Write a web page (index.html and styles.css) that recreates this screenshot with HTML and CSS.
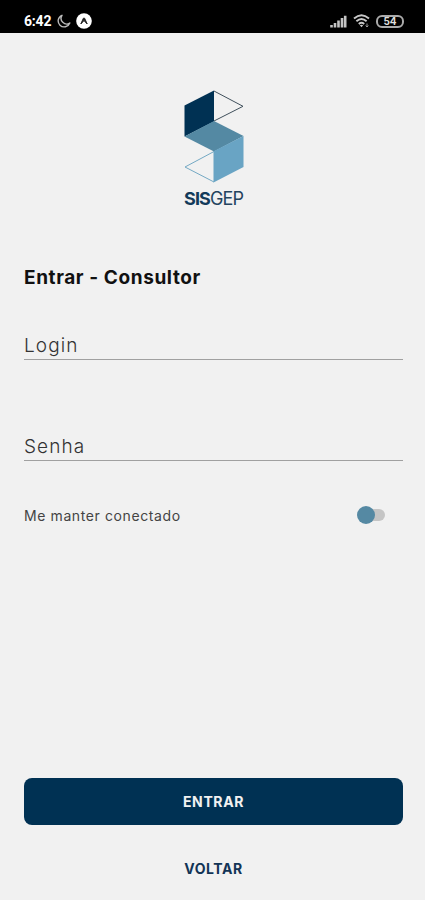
FILE: index.html
```html
<!DOCTYPE html>
<html lang="pt-BR">
<head>
    <meta charset="UTF-8">
    <meta name="viewport" content="width=device-width, initial-scale=1.0">
    <title>SISGEP - Entrar</title>
    <link rel="stylesheet" href="styles.css">
</head>
<body>
    <header class="status-bar">
        <span class="time">6:42</span>
        <svg class="moon" width="14" height="14" viewBox="0 0 14 14">
            <path d="M5 1.3A6 6 0 1 0 12.8 9A5.6 5.6 0 0 1 5 1.3Z" fill="none" stroke="#bbb" stroke-width="1.4" stroke-linejoin="round"/>
        </svg>
        <svg class="app-icon" width="16" height="16" viewBox="0 0 16 16">
            <circle cx="8" cy="8" r="7.8" fill="#fff"/>
            <path d="M4.8 11L7.4 5.2H8.6L11.2 11L8 7.6Z" fill="#222" stroke="#222" stroke-width="1" stroke-linejoin="round"/>
        </svg>
        <svg class="signal" width="17" height="13" viewBox="0 0 17 13">
            <path d="M1.5 12.5V10M5 12.5V8M8.5 12.5V5.5M12 12.5V3M15.2 12.5V.8" fill="none" stroke="#c4c4c4" stroke-width="2.6"/>
        </svg>
        <svg class="wifi" width="17" height="14" viewBox="0 0 17 14">
            <path d="M1 4.5Q8.5 -2 16 4.5M3.4 7.3Q8.5 2.8 13.6 7.3M5.8 10Q8.5 7.6 11.2 10" fill="none" stroke="#c8c8c8" stroke-width="1.9"/>
            <path d="M6.8 11.3L8.5 13.3L10.2 11.3Q8.5 10 6.8 11.3Z" fill="#c8c8c8"/>
            <path d="M14 9.5V13M12.6 11.6L14 13L15.4 11.6" fill="none" stroke="#999" stroke-width="1"/>
        </svg>
        <span class="battery">54</span>
    </header>

    <main class="screen">
        <div class="logo">
            <svg width="61" height="94" viewBox="0 0 61 94">
                <path d="M31 1L60 16.3L31 31" fill="none" stroke="#40505c" stroke-width="1"/>
                <path d="M31 61.5L2 77L31 92" fill="none" stroke="#74a9c4" stroke-width="1"/>
                <path d="M31 .5V31.5L1.5 46.5V15.5Z" fill="#003153"/>
                <path d="M31 31L60.5 46L31 61.5L1.5 46.5Z" fill="#5489a3"/>
                <path d="M60.5 46V77L30.5 92.5V61.3Z" fill="#69a4c4"/>
            </svg>
            <div class="brand"><b>SIS</b>GEP</div>
        </div>

        <h1 class="title">Entrar - Consultor</h1>

        <div class="field">Login</div>
        <div class="field">Senha</div>

        <div class="keep-row">
            <span class="keep-label">Me manter conectado</span>
            <span class="switch"><span class="thumb"></span></span>
        </div>

        <div class="actions">
            <button class="btn-enter">ENTRAR</button>
            <button class="btn-back">VOLTAR</button>
        </div>
    </main>
</body>
</html>
```

FILE: styles.css
```css
* {
    box-sizing: border-box;
}

body {
    margin: 0;
    height: 900px;
    display: flex;
    flex-direction: column;
    overflow: hidden;
    background-color: #f1f1f1;
    font-family: Inter, "Open Sans", sans-serif;
}

.status-bar {
    display: flex;
    align-items: center;
    height: 33px;
    padding: 9px 21px 0 24px;
    background-color: #000;
    color: #fff;
}

.time {
    width: 27px;
    font-family: Roboto, sans-serif;
    font-size: 14px;
    font-weight: 700;
    line-height: 16px;
    letter-spacing: -0.2px;
}

.moon {
    margin-left: 6px;
}

.app-icon {
    margin-left: 5px;
}

.signal {
    margin-left: auto;
}

.wifi {
    margin-left: 6px;
}

.battery {
    width: 28px;
    height: 13px;
    margin-left: 6px;
    border: 2px solid #aaa;
    border-radius: 6px;
    font-size: 10px;
    font-weight: 700;
    line-height: 9px;
    text-align: center;
    color: #ddd;
}

.screen {
    flex: 1;
    display: flex;
    flex-direction: column;
    padding: 57px 22px 19px 24px;
}

.logo {
    display: flex;
    flex-direction: column;
    align-items: center;
}

.brand {
    height: 20px;
    margin-top: 5px;
    font-size: 18px;
    line-height: 20px;
    letter-spacing: -0.9px;
    white-space: nowrap;
    color: #24445f;
}

.brand b {
    font-weight: 700;
    color: #123a5a;
}

.title {
    margin: 55px 0 0;
    font-size: 19px;
    font-weight: 700;
    line-height: 27px;
    letter-spacing: 0.6px;
    color: #111;
}

.field {
    height: 31px;
    margin-top: 38px;
    border-bottom: 1px solid #a0a0a0;
    font-size: 19px;
    font-weight: 300;
    line-height: 34px;
    letter-spacing: 1.1px;
    color: #333;
}

.field + .field {
    margin-top: 70px;
}

.keep-row {
    display: flex;
    align-items: center;
    justify-content: space-between;
    height: 20px;
    margin-top: 44px;
    padding-right: 18px;
}

.keep-label {
    padding-top: 2px;
    font-size: 14px;
    line-height: 20px;
    letter-spacing: 0.6px;
    color: #444;
}

.switch {
    display: flex;
    align-items: center;
    width: 24px;
    height: 12px;
    border-radius: 6px;
    background-color: #c5c5c5;
}

.thumb {
    flex: none;
    width: 18px;
    height: 18px;
    margin-left: -4px;
    border-radius: 50%;
    background-color: #5589a3;
}

.actions {
    display: flex;
    flex-direction: column;
    margin-top: auto;
}

.btn-enter,
.btn-back {
    border: none;
    padding: 0;
    font-family: inherit;
    font-size: 14px;
    font-weight: 700;
    letter-spacing: 0.6px;
    cursor: pointer;
}

.btn-enter {
    height: 47px;
    border-radius: 8px;
    background-color: #003153;
    color: #f1f1f1;
}

.btn-back {
    height: 26px;
    margin-top: 30px;
    background: none;
    color: #123456;
}
```
